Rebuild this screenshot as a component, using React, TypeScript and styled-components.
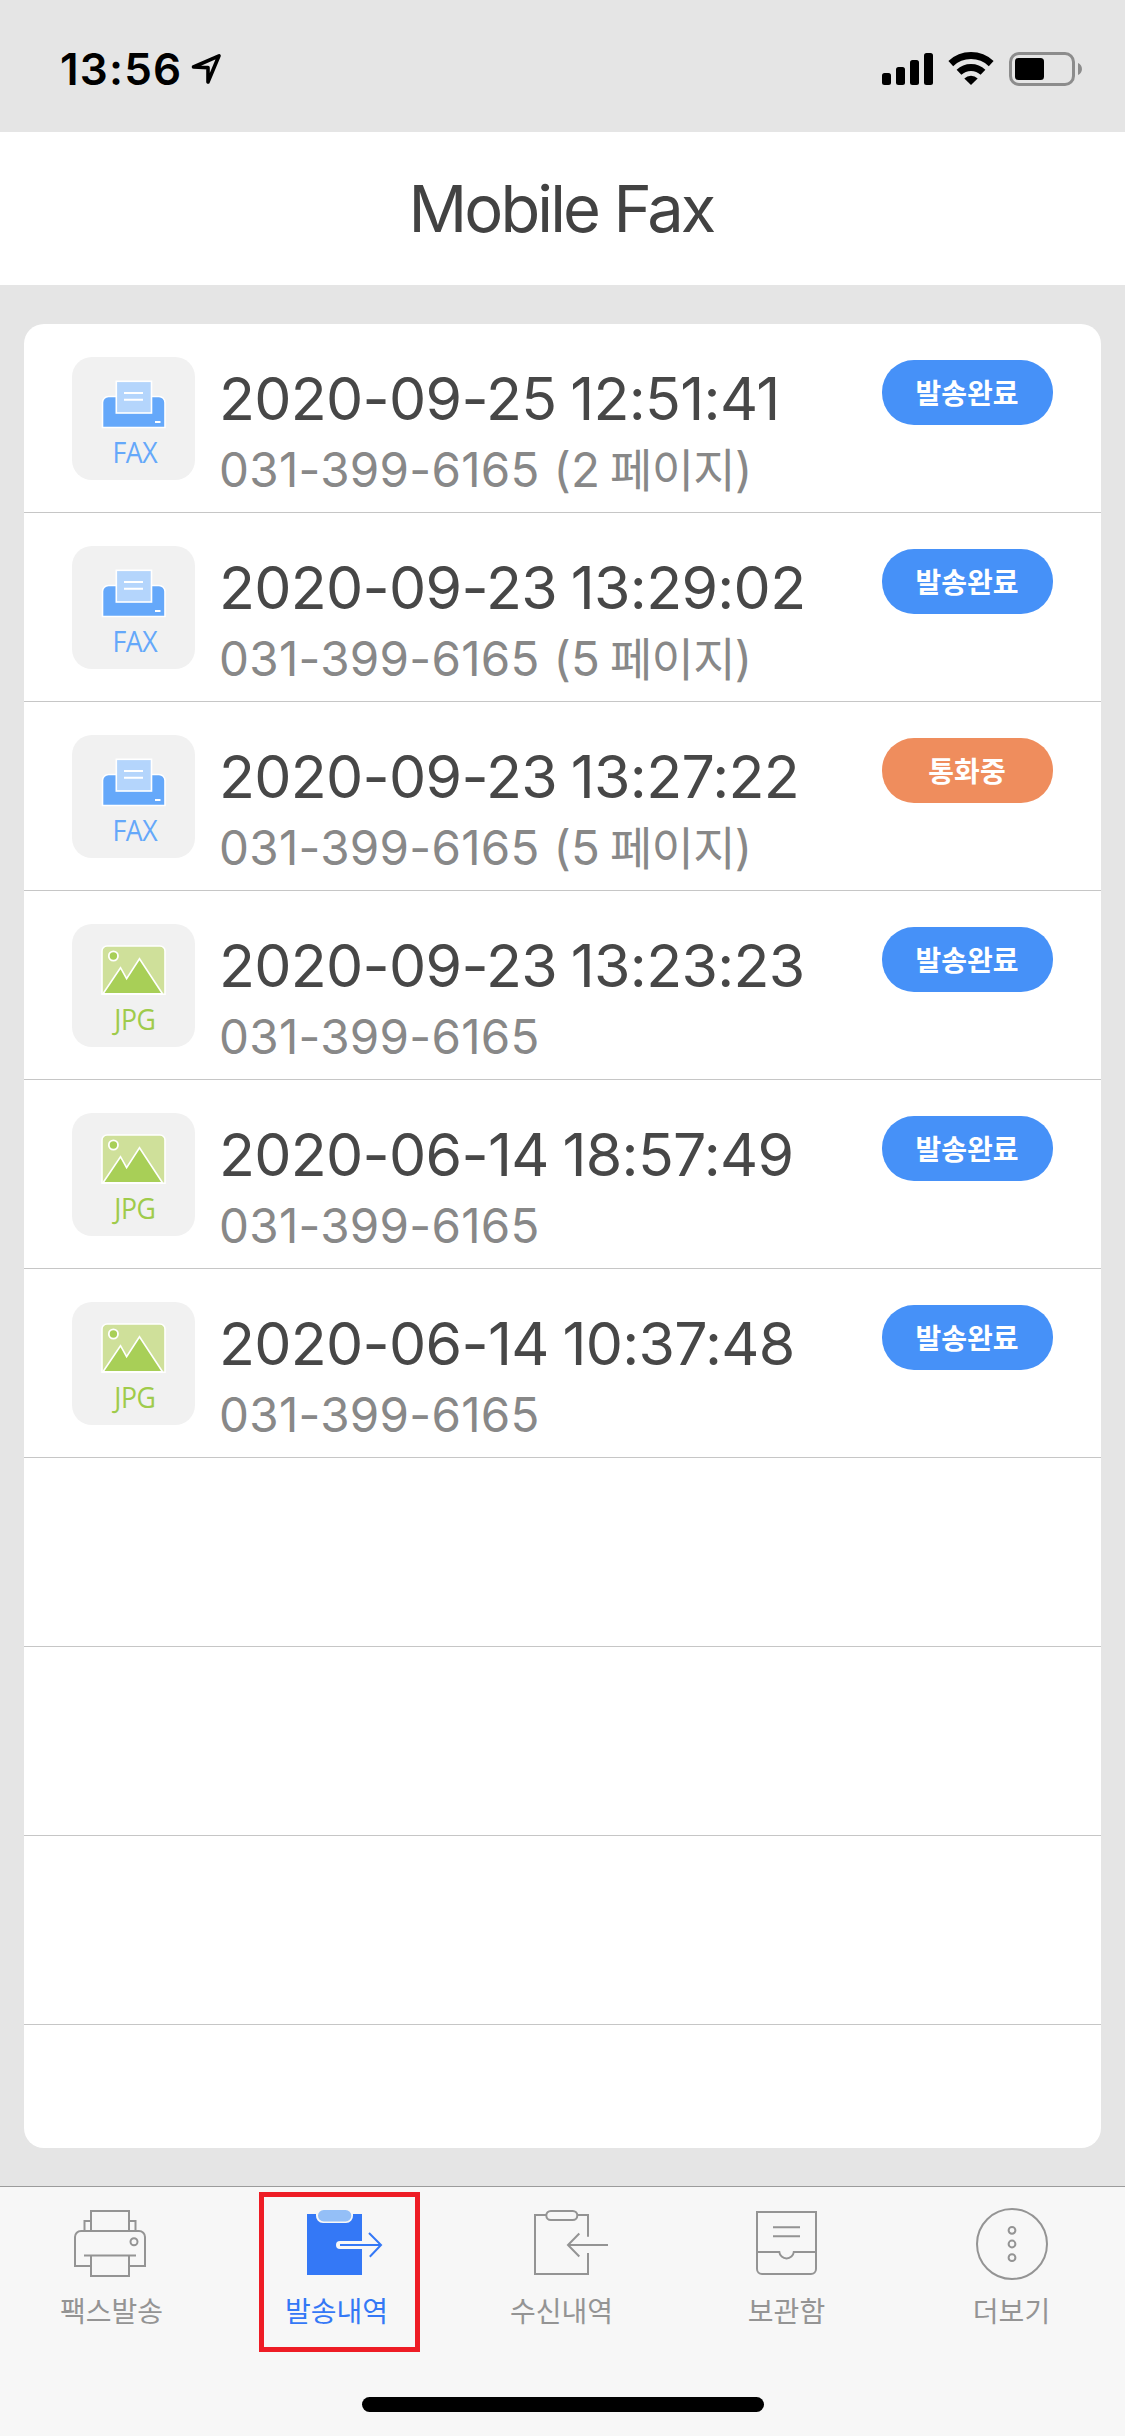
import React from "react";
import styled, { createGlobalStyle } from "styled-components";

const GlobalStyle = createGlobalStyle`
  * { box-sizing: border-box; }
  body { margin: 0; background: #e5e5e5; font-family: Inter, "Noto Sans CJK KR", sans-serif; }
  svg { display: block; flex: none; overflow: visible; }
`;

const Screen = styled.div`
  width: 1125px;
  height: 2436px;
  display: flex;
  flex-direction: column;
  background: #e5e5e5;
  overflow: hidden;
`;

const StatusBar = styled.div`
  height: 132px;
  flex: none;
  display: flex;
  justify-content: space-between;
  padding: 52px 43px 0 60px;
`;

const StatusGroup = styled.div<{ $gap: number }>`
  display: flex;
  align-items: flex-start;
  gap: ${(p) => p.$gap}px;
`;

const Clock = styled.span`
  width: 121px;
  font-size: 44px;
  line-height: 34px;
  font-weight: 600;
  letter-spacing: 1.2px;
  white-space: nowrap;
  color: #000;
`;

const Header = styled.header`
  height: 153px;
  flex: none;
  padding: 37px 3px 0 0;
  background: #fff;
  text-align: center;
`;

const Title = styled.h1`
  margin: 0;
  font-size: 65px;
  line-height: 80px;
  font-weight: 400;
  letter-spacing: -2.9px;
  color: #424242;
`;

const Card = styled.main`
  height: 1824px;
  flex: none;
  margin: 39px 24px 38px;
  border-radius: 20px;
  background: #fff;
  overflow: hidden;
`;

const Row = styled.div`
  height: 189px;
  display: flex;
  align-items: flex-start;
  padding: 33px 48px 0;
  border-bottom: 1px solid #c6c6c6;
`;

const FileTile = styled.div<{ $color: string }>`
  width: 123px;
  height: 123px;
  flex: none;
  border-radius: 20px;
  background: #f1f1f1;
  color: ${(p) => p.$color};
  text-align: center;
`;

const TileLabel = styled.div`
  margin-top: -1px;
  padding-left: 3px;
  font-family: "Open Sans", "Noto Sans", sans-serif;
  font-size: 29px;
  line-height: 40px;
  letter-spacing: -0.5px;
  transform: scaleX(0.92);
`;

const Details = styled.div`
  flex: 1;
  padding: 6px 0 0 24px;
  white-space: nowrap;
`;

const DateText = styled.div`
  font-size: 59px;
  line-height: 72px;
  letter-spacing: -0.7px;
  word-spacing: -2px;
  color: #474747;
`;

const Recipient = styled.div`
  margin-top: 5px;
  font-size: 47.5px;
  line-height: 60px;
  letter-spacing: 0.3px;
  color: #888;
`;

const Hangul = styled.span`
  margin-left: -4px;
  font-family: "Noto Sans CJK KR", sans-serif;
  font-size: 46px;
  font-weight: 400;
  line-height: 0;
  letter-spacing: -0.7px;
`;

const Badge = styled.div<{ $busy: boolean }>`
  width: 171px;
  height: 65px;
  flex: none;
  margin-top: 3px;
  padding-right: 1px;
  border-radius: 32px;
  background: ${(p) => (p.$busy ? "#ef8d5d" : "#4691f8")};
  color: #fff;
  font-family: "Noto Sans CJK KR", sans-serif;
  font-size: 28px;
  line-height: 65px;
  font-weight: 700;
  text-align: center;
`;

const TabBar = styled.nav`
  flex: 1;
  display: flex;
  flex-direction: column;
  border-top: 1px solid #9b9b9b;
  background: #f7f7f7;
`;

const Tabs = styled.div`
  height: 210px;
  display: flex;
`;

const Tab = styled.div<{ $active?: boolean }>`
  position: relative;
  width: 225px;
  display: flex;
  flex-direction: column;
  align-items: center;
  padding-top: 21px;
  color: ${(p) => (p.$active ? "#3478f6" : "#949494")};
`;

const TabLabel = styled.span`
  margin-top: 10px;
  padding-right: 2px;
  font-family: "Noto Sans CJK KR", sans-serif;
  font-size: 28px;
  line-height: 40px;
  white-space: nowrap;
`;

const Highlight = styled.div`
  position: absolute;
  left: 34px;
  top: 5px;
  width: 161px;
  height: 160px;
  border: 5px solid #ee1c25;
`;

const HomeIndicator = styled.div`
  width: 402px;
  height: 15px;
  margin-left: 362px;
  border-radius: 8px;
  background: #000;
`;

const LocationArrow = () => (
  <svg width="32" height="34" viewBox="191 52 32 34" fill="none" stroke="#000" strokeWidth="3.6" strokeLinejoin="round">
    <path d="M193.5 67 L219 55.8 L208 82 V67.6 Z" />
  </svg>
);

const SignalIcon = () => (
  <svg width="51" height="34" viewBox="882 52 51 34">
    <rect x="882" y="73" width="9" height="12" rx="2.5" />
    <rect x="896" y="67" width="9" height="18" rx="2.5" />
    <rect x="910" y="60" width="9" height="25" rx="2.5" />
    <rect x="924" y="53" width="9" height="32" rx="2.5" />
  </svg>
);

const WifiIcon = () => (
  <svg width="46" height="34" viewBox="948 52 46 34" fill="none" stroke="#000" strokeWidth="7">
    <path d="M950.8 63.6 A29.5 29.5 0 0 1 991.2 63.6" />
    <path d="M959 72.2 A17.6 17.6 0 0 1 983 72.2" />
    <path d="M964.3 78.4 A9.6 9.6 0 0 1 977.7 78.4 L971 85 Z" fill="#000" stroke="none" />
  </svg>
);

const BatteryIcon = () => (
  <svg width="73" height="34" viewBox="1009 52 73 34">
    <rect x="1010.5" y="53.5" width="63" height="31" rx="8.5" fill="none" stroke="#8c8c8c" strokeWidth="3" />
    <rect x="1015" y="58" width="29" height="22" rx="3.5" />
    <path d="M1078 63 C1083.300 65 1083.300 73 1078 75 Z" fill="#8c8c8c" />
  </svg>
);

const FaxArt = () => (
  <svg width="123" height="76" viewBox="0 0 123 76">
    <path d="M30.500 70.500 V45.500 a6 6 0 0 1 6 -6 H87 a6 6 0 0 1 6 6 V70.500 Z" fill="#65a8fa" stroke="#fff" strokeWidth="1.6" />
    <rect x="44.300" y="24.300" width="35.200" height="31.700" fill="#b4d5fc" stroke="#fff" strokeWidth="1.6" />
    <path d="M52 36 H71 M52 42.700 H71" stroke="#fff" strokeWidth="2" />
    <path d="M83 65 H88.500" stroke="#fff" strokeWidth="2" />
  </svg>
);

const JpgArt = () => (
  <svg width="123" height="76" viewBox="0 0 123 76">
    <path d="M30 70.300 V27 a5 5 0 0 1 5 -5 H88 a5 5 0 0 1 5 5 V70.300 Z" fill="#cfe09a" stroke="#fff" strokeWidth="1.6" />
    <path d="M31 69.800 L48.500 43.700 L54.600 54.700 L67.500 34.700 L90.500 69.800 Z" fill="#a8cf57" stroke="#fff" strokeWidth="1.6" />
    <circle cx="41.400" cy="32" r="4.600" fill="#a8cf57" stroke="#fff" strokeWidth="1.8" />
  </svg>
);

const TabSvg = ({ children }: { children: React.ReactNode }) => (
  <svg width="85" height="72" viewBox="0 0 85 72" fill="none" stroke="currentColor" strokeWidth="2">
    {children}
  </svg>
);

const PrinterIcon = () => (
  <TabSvg>
    <path d="M21 23 V3 H59 V23" />
    <path d="M14.500 23 V13 H21 M59 13 H65.500 V23" />
    <path d="M21 58 H5 V29 a6 6 0 0 1 6 -6 H69 a6 6 0 0 1 6 6 V58 H59" />
    <path d="M14 47.500 H66 M21 47.500 V68 H59 V47.500" />
    <circle cx="64" cy="33.700" r="3.500" />
  </TabSvg>
);

const SentIcon = () => (
  <TabSvg>
    <rect x="12" y="6" width="55" height="61" fill="currentColor" stroke="none" />
    <path d="M67.500 33 H45 a4 4 0 0 0 0 8 H67.500 Z" fill="#f7f7f7" stroke="none" />
    <path d="M21 5 H58 V7.500 a7 7 0 0 1 -7 7.500 H28 a7 7 0 0 1 -7 -7.500 Z" fill="#f7f7f7" stroke="none" />
    <rect x="23" y="2" width="33.300" height="11.400" rx="5.700" fill="#94bff7" stroke="none" />
    <path d="M45 37 H86 M74 25 L86 37 L74.800 48.700" />
  </TabSvg>
);

const ReceivedIcon = () => (
  <TabSvg>
    <path d="M26 7 H15 V66 H68 V45 M68 28.700 V7 H57.500" />
    <rect x="26.300" y="3" width="31" height="9" rx="4.500" />
    <path d="M88 37 H48 M59.300 25.500 L48 37 L59.300 48.500" />
  </TabSvg>
);

const ArchiveIcon = () => (
  <TabSvg>
    <path d="M12 4 H71 V61 a5 5 0 0 1 -5 5 H17 a5 5 0 0 1 -5 -5 Z" />
    <path d="M12 44 H34.300 a7.300 7.300 0 0 0 14.500 0 H71" />
    <path d="M28 19.300 H55 M28 28.300 H55" />
  </TabSvg>
);

const MoreIcon = () => (
  <TabSvg>
    <circle cx="42" cy="36" r="35" />
    <circle cx="42" cy="22.300" r="3.400" />
    <circle cx="42" cy="36" r="3.400" />
    <circle cx="42" cy="49.700" r="3.400" />
  </TabSvg>
);

interface FaxRecord {
  kind: "FAX" | "JPG";
  date: string;
  phone: string;
  pages?: number;
  status: string;
}

const records: FaxRecord[] = [
  { kind: "FAX", date: "2020-09-25 12:51:41", phone: "031-399-6165", pages: 2, status: "발송완료" },
  { kind: "FAX", date: "2020-09-23 13:29:02", phone: "031-399-6165", pages: 5, status: "발송완료" },
  { kind: "FAX", date: "2020-09-23 13:27:22", phone: "031-399-6165", pages: 5, status: "통화중" },
  { kind: "JPG", date: "2020-09-23 13:23:23", phone: "031-399-6165", status: "발송완료" },
  { kind: "JPG", date: "2020-06-14 18:57:49", phone: "031-399-6165", status: "발송완료" },
  { kind: "JPG", date: "2020-06-14 10:37:48", phone: "031-399-6165", status: "발송완료" },
];

const tabs = [
  { label: "팩스발송", Icon: PrinterIcon },
  { label: "발송내역", Icon: SentIcon, active: true },
  { label: "수신내역", Icon: ReceivedIcon },
  { label: "보관함", Icon: ArchiveIcon },
  { label: "더보기", Icon: MoreIcon },
];

export default function App() {
  return (
    <Screen>
      <GlobalStyle />
      <StatusBar>
        <StatusGroup $gap={10}>
          <Clock>13:56</Clock>
          <LocationArrow />
        </StatusGroup>
        <StatusGroup $gap={15}>
          <SignalIcon />
          <WifiIcon />
          <BatteryIcon />
        </StatusGroup>
      </StatusBar>
      <Header>
        <Title>Mobile Fax</Title>
      </Header>
      <Card>
        {records.map((r) => (
          <Row key={r.date}>
            <FileTile $color={r.kind === "FAX" ? "#65a8fa" : "#9fcb4b"}>
              {r.kind === "FAX" ? <FaxArt /> : <JpgArt />}
              <TileLabel>{r.kind}</TileLabel>
            </FileTile>
            <Details>
              <DateText>{r.date}</DateText>
              <Recipient>
                {r.phone}
                {r.pages && (
                  <>
                    {" "}({r.pages} <Hangul>페이지</Hangul>)
                  </>
                )}
              </Recipient>
            </Details>
            <Badge $busy={r.status === "통화중"}>{r.status}</Badge>
          </Row>
        ))}
        {[0, 1, 2].map((i) => (
          <Row key={i} />
        ))}
      </Card>
      <TabBar>
        <Tabs>
          {tabs.map(({ label, Icon, active }) => (
            <Tab key={label} $active={active}>
              <Icon />
              <TabLabel>{label}</TabLabel>
              {active && <Highlight />}
            </Tab>
          ))}
        </Tabs>
        <HomeIndicator />
      </TabBar>
    </Screen>
  );
}
